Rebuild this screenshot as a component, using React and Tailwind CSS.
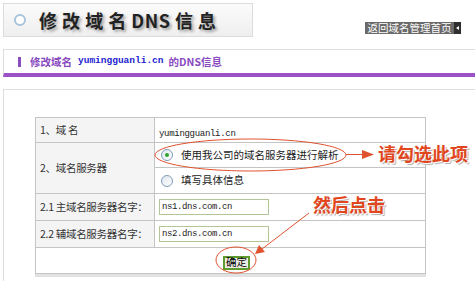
import React from "react";

const cjk = "font-['Noto_Sans_CJK_SC','Noto_Sans',sans-serif]";
const mono = "font-['Liberation_Mono','DejaVu_Sans_Mono',monospace]";

function Radio({ checked }) {
  return (
    <span className="w-[12px] h-[12px] rounded-full border border-[#7f9db9] bg-gradient-to-br from-[#dfe6ee] to-white flex items-center justify-center shrink-0">
      {checked && <span className="w-[4px] h-[4px] rounded-full bg-[#2fa52f]" />}
    </span>
  );
}

export default function App() {
  const labelCell = `bg-[#f4f4f4] border border-[#c4c4c4] p-0 pl-[4px] text-[10.5px] tracking-[-0.3px] leading-none whitespace-nowrap text-[#333] ${cjk}`;
  const valueCell = "bg-white border border-[#c4c4c4] p-0 pl-[4px] leading-none";
  return (
    <div className={`relative w-[475px] h-[281px] overflow-hidden bg-white ${cjk}`}>
      {/* header */}
      <div className="flex items-end justify-between pt-[3px] pl-[3px] pr-[14px]">
        <div className="w-[250px] h-[34px] border border-[#dcdcdc] bg-gradient-to-b from-[#fbfbfb] to-[#efefef] flex items-center pl-[10px]">
          <span className="w-[12px] h-[12px] rounded-full border-2 border-[#a9c3dd] bg-white shrink-0" />
          <span className="ml-[13px] text-[18px] font-bold text-[#222] tracking-[0.5px] [text-shadow:2px_2px_3px_#9a9a9a] whitespace-nowrap leading-none">
            修 改 域 名 DNS 信 息
          </span>
        </div>
        <div className="flex h-[12px] mb-[3px]">
          <span className="bg-[#6a6a6a] text-white text-[10.5px] leading-[12px] w-[89px] flex items-center justify-center whitespace-nowrap">
            返回域名管理首页
          </span>
          <span className="bg-[#2f2f2f] w-[7px] flex items-center justify-center">
            <span className="w-0 h-0 border-y-[2px] border-y-transparent border-r-[3px] border-r-white" />
          </span>
        </div>
      </div>

      {/* purple title bar */}
      <div className="ml-[3px] mt-[12px] w-[500px] border-t border-l border-[#dedede] border-b-[4px] border-b-[#9b52c6] h-[28px] flex items-center pl-[14px]">
        <span className="w-[3px] h-[10px] bg-[#8b4cc0]" />
        <span className="ml-[9px] text-[10.5px] font-bold text-[#8a4abf] whitespace-nowrap flex items-center">
          修改域名
          <span className={`ml-[6px] mr-[5px] text-[#1c1cd0] ${mono} text-[9.5px]`}>yumingguanli.cn</span>
          的DNS信息
        </span>
      </div>

      {/* main box */}
      <div className="ml-[3px] mt-[12px] w-[500px] border-t border-l border-[#dedede] pt-[27px] pl-[31px] pb-[20px]">
        <table className="border-collapse w-[391px] table-fixed shadow-[0_3px_0_#e2e2e2]">
          <colgroup>
            <col className="w-[119px]" />
            <col />
          </colgroup>
          <tbody>
            <tr className="h-[25px]">
              <td className={labelCell}>1、域 名</td>
              <td className={valueCell}>
                <span className={`${mono} text-[9px] tracking-[-0.3px] text-[#222]`}>yumingguanli.cn</span>
              </td>
            </tr>
            <tr className="h-[25px]">
              <td className={labelCell} rowSpan={2}>2、域名服务器</td>
              <td className={`${valueCell} pl-[6px]`}>
                <div className="flex items-center gap-[8px]">
                  <Radio checked />
                  <span className="text-[10.5px] text-[#222] whitespace-nowrap">使用我公司的域名服务器进行解析</span>
                </div>
              </td>
            </tr>
            <tr className="h-[26px]">
              <td className={`${valueCell} pl-[6px]`}>
                <div className="flex items-center gap-[8px]">
                  <Radio />
                  <span className="text-[10.5px] text-[#222] whitespace-nowrap">填写具体信息</span>
                </div>
              </td>
            </tr>
            <tr className="h-[27px]">
              <td className={labelCell}>2.1 主域名服务器名字：</td>
              <td className={valueCell}>
                <div className={`w-[110px] h-[16px] border border-[#b3c497] bg-white pl-[2px] flex items-center ${mono} text-[9px] tracking-[-0.4px] text-[#222]`}>
                  ns1.dns.com.cn
                </div>
              </td>
            </tr>
            <tr className="h-[27px]">
              <td className={labelCell}>2.2 辅域名服务器名字：</td>
              <td className={valueCell}>
                <div className={`w-[110px] h-[16px] border border-[#b3c497] bg-white pl-[2px] flex items-center ${mono} text-[9px] tracking-[-0.4px] text-[#222]`}>
                  ns2.dns.com.cn
                </div>
              </td>
            </tr>
            <tr className="h-[26px]">
              <td className="bg-white border border-[#c4c4c4] p-0 pl-[187px] leading-none" colSpan={2}>
                <span className="inline-flex w-[27px] h-[14px] border-2 border-[#5f9a2f] bg-[#ecece4] items-center justify-center text-[10.5px] leading-none text-black">
                  确定
                </span>
              </td>
            </tr>
          </tbody>
        </table>
      </div>

      {/* annotations */}
      <svg className="absolute left-0 top-0 pointer-events-none" width="475" height="281" viewBox="0 0 475 281">
        <ellipse cx="250.5" cy="155" rx="95.5" ry="16" fill="none" stroke="#e0532f" strokeWidth="1" />
        <line x1="346" y1="154.5" x2="364" y2="154.5" stroke="#e0532f" strokeWidth="1" />
        <polygon points="362,150 374,154.5 362,159" fill="#e0532f" />
        <ellipse cx="236" cy="260" rx="20" ry="13" fill="none" stroke="#e0532f" strokeWidth="1" />
        <line x1="309" y1="213" x2="262" y2="249" stroke="#e0532f" strokeWidth="1" />
        <polygon points="255,254 259,245 265,252" fill="#e0532f" />
      </svg>
      <div className="absolute left-[378px] top-[144px] text-[18px] font-bold leading-none text-[#e2461c] whitespace-nowrap [text-shadow:1px_1px_0_#fff,2px_2px_1px_#b0b0b0]">
        请勾选此项
      </div>
      <div className="absolute left-[313px] top-[195px] text-[18px] font-bold leading-none text-[#e2461c] whitespace-nowrap [text-shadow:1px_1px_0_#fff,2px_2px_1px_#b0b0b0]">
        然后点击
      </div>
    </div>
  );
}
